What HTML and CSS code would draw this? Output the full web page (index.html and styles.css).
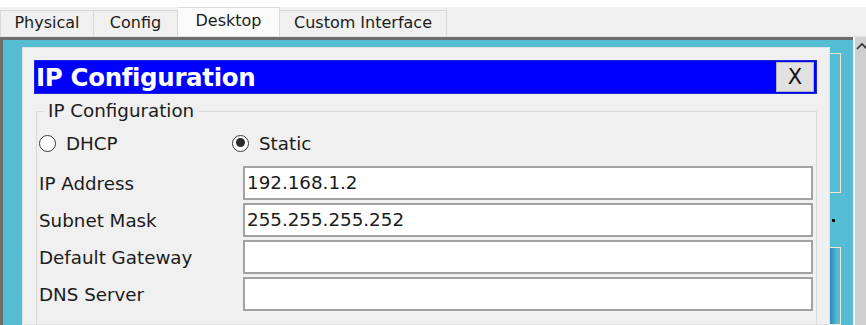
FILE: index.html
```html
<!DOCTYPE html>
<html lang="en">
<head>
	<meta charset="UTF-8">
	<title>PC - Desktop - IP Configuration</title>
	<link rel="stylesheet" href="styles.css">
</head>
<body>
	<nav class="tabs">
		<span class="tab tab-physical">Physical</span>
		<span class="tab tab-config">Config</span>
		<span class="tab tab-desktop active">Desktop</span>
		<span class="tab tab-custom">Custom Interface</span>
	</nav>

	<div class="workspace">
		<section class="panel">
			<header class="titlebar">
				<h1>IP Configuration</h1>
				<button class="close" type="button">X</button>
			</header>

			<fieldset class="group">
				<legend>IP Configuration</legend>

				<div class="mode">
					<label class="radio"><span class="dot"></span>DHCP</label>
					<label class="radio checked"><span class="dot"></span>Static</label>
				</div>

				<div class="fields">
					<span class="label">IP Address</span>
					<span class="input">192.168.1.2</span>
					<span class="label">Subnet Mask</span>
					<span class="input">255.255.255.252</span>
					<span class="label">Default Gateway</span>
					<span class="input"></span>
					<span class="label">DNS Server</span>
					<span class="input"></span>
				</div>
			</fieldset>
		</section>

		<aside class="behind">
			<div class="backwin top"></div>
			<div class="mark"></div>
			<div class="backwin bottom"></div>
		</aside>

		<div class="scrollbar">
			<svg class="arrow" width="11" height="10" viewBox="0 0 11 10"><polyline points="2,8 7,3 12,8" fill="none" stroke="#333" stroke-width="1.6"/></svg>
		</div>
	</div>
</body>
</html>
```

FILE: styles.css
```css
* {
	box-sizing: border-box;
}

html, body {
	margin: 0;
	padding: 0;
	background: #fff;
}

body {
	width: 866px;
	height: 325px;
	overflow: hidden;
	font-family: "DejaVu Sans", Verdana, sans-serif;
	color: #1b1b1b;
}

/* tab strip */
.tabs {
	display: flex;
	align-items: flex-end;
	height: 30px;
	margin-top: 7px;
	background: #f0f0f0;
	border-bottom: 1px solid #e4e4e4;
}

.tab {
	height: 26px;
	line-height: 24px;
	font-size: 16px;
	text-align: center;
	border: 1px solid #d9d9d9;
	border-bottom: 0;
	background: #f0f0f0;
}

.tab-physical { width: 94px; }
.tab-config { width: 84px; border-left: 0; }
.tab-custom { width: 167px; border-left: 0; }

.tab.active {
	width: 102px;
	height: 29px;
	line-height: 26px;
	background: #fbfbfb;
	border-color: #dadada;
	border-left: 0;
}

/* workspace */
.workspace {
	display: flex;
	height: 288px;
	background: #55bdd3;
	border-top: 3px solid #6c6c6c;
	border-left: 3px solid #6c6c6c;
	padding: 7px 0 0 19px;
}

.panel {
	width: 808px;
	background: #f0f0f0;
	border: 1px solid #e2e2e2;
	padding: 12px 12px 0 11px;
}

.titlebar {
	display: flex;
	align-items: center;
	justify-content: space-between;
	height: 34px;
	background: #0000ff;
	border: 1px solid #2020e0;
	padding: 0 2px 0 1px;
}

.titlebar h1 {
	margin: 0;
	color: #fff;
	font-size: 24.5px;
	font-weight: 700;
	letter-spacing: -0.35px;
}

.close {
	width: 38px;
	height: 30px;
	padding: 0;
	background: #e1e1e1;
	border: 1px solid #b4b4b4;
	font-family: "DejaVu Sans", Verdana, sans-serif;
	font-size: 21px;
	color: #111;
	line-height: 28px;
}

/* group box */
.group {
	margin: 6px 0 0 2px;
	padding: 9px 0 0 2px;
	border: 1px solid #dadada;
	border-bottom: 0;
	width: 781px;
	height: 240px;
}

.group legend {
	margin-left: 5px;
	padding: 0 4px;
	font-size: 18.3px;
	line-height: 22px;
}

.mode {
	display: flex;
	height: 24px;
	align-items: center;
}

.radio {
	display: flex;
	align-items: center;
	gap: 10px;
	font-size: 18.3px;
}

.radio:first-child {
	width: 193px;
}

.dot {
	width: 17px;
	height: 17px;
	border: 1.5px solid #3a3a3a;
	border-radius: 50%;
	background: #fff;
	position: relative;
}

.radio.checked .dot::after {
	content: "";
	position: absolute;
	left: 2.5px;
	top: 2.5px;
	width: 9px;
	height: 9px;
	border-radius: 50%;
	background: #2a2a2a;
}

.fields {
	display: grid;
	grid-template-columns: 204px 570px;
	grid-auto-rows: 34px;
	row-gap: 3px;
	margin-top: 11px;
	align-items: center;
}

.label {
	font-size: 18.3px;
}

.input {
	height: 34px;
	border: 2px solid #a2a2a2;
	background: #fff;
	padding-left: 2px;
	font-size: 18.3px;
	line-height: 30px;
}

/* window partially hidden behind the panel */
.behind {
	width: 23px;
	display: flex;
	flex-direction: column;
}

.backwin {
	width: 11px;
	border: 1px solid #f3e9d0;
	border-left: 0;
	background: #55bdd3;
}

.backwin.top {
	margin-top: 6px;
	height: 140px;
}

.mark {
	margin: 26px 0 0 2px;
	width: 3px;
	height: 3px;
	background: #111;
}

.backwin.bottom {
	margin-top: 25px;
	flex: 1;
	background: linear-gradient(to right, #2b86c2, #55bdd3 70%);
}

.scrollbar {
	width: 13px;
	margin-top: -10px;
	margin-bottom: -10px;
	background: #cfcfcf;
	border-left: 2px solid #fafafa;
	position: relative;
}

.arrow {
	position: absolute;
	left: 0;
	top: 4px;
}
```
